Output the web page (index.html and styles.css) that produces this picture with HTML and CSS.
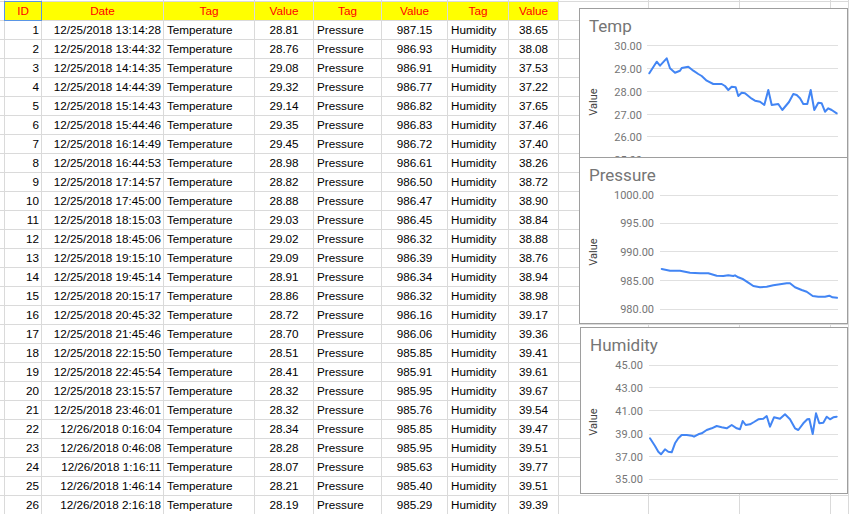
FILE: index.html
```html
<!DOCTYPE html>
<html>
<head>
<meta charset="utf-8">
<title>Sensor log</title>
<link rel="stylesheet" href="styles.css">
</head>
<body>
<table class="sheet">
<colgroup>
<col class="w-sliver"><col class="w-id"><col class="w-date"><col class="w-tag1"><col class="w-val1"><col class="w-tag2"><col class="w-val2"><col class="w-tag3"><col class="w-val3"><col class="w-e1"><col class="w-e"><col class="w-e"><col class="w-end">
</colgroup>
<tbody>
<tr class="sliver"><td></td><td></td><td></td><td></td><td></td><td></td><td></td><td></td><td></td><td></td><td></td><td></td><td></td></tr>
<tr class="hdr"><td class="blank"></td><td class="sel">ID</td><td>Date</td><td>Tag</td><td>Value</td><td>Tag</td><td>Value</td><td>Tag</td><td>Value</td><td class="blank"></td><td class="blank"></td><td class="blank"></td><td class="blank"></td></tr>
<tr><td></td><td class="r">1</td><td class="r">12/25/2018 13:14:28</td><td>Temperature</td><td class="c">28.81</td><td>Pressure</td><td class="c">987.15</td><td>Humidity</td><td class="c">38.65</td><td></td><td></td><td></td><td></td></tr>
<tr><td></td><td class="r">2</td><td class="r">12/25/2018 13:44:32</td><td>Temperature</td><td class="c">28.76</td><td>Pressure</td><td class="c">986.93</td><td>Humidity</td><td class="c">38.08</td><td></td><td></td><td></td><td></td></tr>
<tr><td></td><td class="r">3</td><td class="r">12/25/2018 14:14:35</td><td>Temperature</td><td class="c">29.08</td><td>Pressure</td><td class="c">986.91</td><td>Humidity</td><td class="c">37.53</td><td></td><td></td><td></td><td></td></tr>
<tr><td></td><td class="r">4</td><td class="r">12/25/2018 14:44:39</td><td>Temperature</td><td class="c">29.32</td><td>Pressure</td><td class="c">986.77</td><td>Humidity</td><td class="c">37.22</td><td></td><td></td><td></td><td></td></tr>
<tr><td></td><td class="r">5</td><td class="r">12/25/2018 15:14:43</td><td>Temperature</td><td class="c">29.14</td><td>Pressure</td><td class="c">986.82</td><td>Humidity</td><td class="c">37.65</td><td></td><td></td><td></td><td></td></tr>
<tr><td></td><td class="r">6</td><td class="r">12/25/2018 15:44:46</td><td>Temperature</td><td class="c">29.35</td><td>Pressure</td><td class="c">986.83</td><td>Humidity</td><td class="c">37.46</td><td></td><td></td><td></td><td></td></tr>
<tr><td></td><td class="r">7</td><td class="r">12/25/2018 16:14:49</td><td>Temperature</td><td class="c">29.45</td><td>Pressure</td><td class="c">986.72</td><td>Humidity</td><td class="c">37.40</td><td></td><td></td><td></td><td></td></tr>
<tr><td></td><td class="r">8</td><td class="r">12/25/2018 16:44:53</td><td>Temperature</td><td class="c">28.98</td><td>Pressure</td><td class="c">986.61</td><td>Humidity</td><td class="c">38.26</td><td></td><td></td><td></td><td></td></tr>
<tr><td></td><td class="r">9</td><td class="r">12/25/2018 17:14:57</td><td>Temperature</td><td class="c">28.82</td><td>Pressure</td><td class="c">986.50</td><td>Humidity</td><td class="c">38.72</td><td></td><td></td><td></td><td></td></tr>
<tr><td></td><td class="r">10</td><td class="r">12/25/2018 17:45:00</td><td>Temperature</td><td class="c">28.88</td><td>Pressure</td><td class="c">986.47</td><td>Humidity</td><td class="c">38.90</td><td></td><td></td><td></td><td></td></tr>
<tr><td></td><td class="r">11</td><td class="r">12/25/2018 18:15:03</td><td>Temperature</td><td class="c">29.03</td><td>Pressure</td><td class="c">986.45</td><td>Humidity</td><td class="c">38.84</td><td></td><td></td><td></td><td></td></tr>
<tr><td></td><td class="r">12</td><td class="r">12/25/2018 18:45:06</td><td>Temperature</td><td class="c">29.02</td><td>Pressure</td><td class="c">986.32</td><td>Humidity</td><td class="c">38.88</td><td></td><td></td><td></td><td></td></tr>
<tr><td></td><td class="r">13</td><td class="r">12/25/2018 19:15:10</td><td>Temperature</td><td class="c">29.09</td><td>Pressure</td><td class="c">986.39</td><td>Humidity</td><td class="c">38.76</td><td></td><td></td><td></td><td></td></tr>
<tr><td></td><td class="r">14</td><td class="r">12/25/2018 19:45:14</td><td>Temperature</td><td class="c">28.91</td><td>Pressure</td><td class="c">986.34</td><td>Humidity</td><td class="c">38.94</td><td></td><td></td><td></td><td></td></tr>
<tr><td></td><td class="r">15</td><td class="r">12/25/2018 20:15:17</td><td>Temperature</td><td class="c">28.86</td><td>Pressure</td><td class="c">986.32</td><td>Humidity</td><td class="c">38.98</td><td></td><td></td><td></td><td></td></tr>
<tr><td></td><td class="r">16</td><td class="r">12/25/2018 20:45:32</td><td>Temperature</td><td class="c">28.72</td><td>Pressure</td><td class="c">986.16</td><td>Humidity</td><td class="c">39.17</td><td></td><td></td><td></td><td></td></tr>
<tr><td></td><td class="r">17</td><td class="r">12/25/2018 21:45:46</td><td>Temperature</td><td class="c">28.70</td><td>Pressure</td><td class="c">986.06</td><td>Humidity</td><td class="c">39.36</td><td></td><td></td><td></td><td></td></tr>
<tr><td></td><td class="r">18</td><td class="r">12/25/2018 22:15:50</td><td>Temperature</td><td class="c">28.51</td><td>Pressure</td><td class="c">985.85</td><td>Humidity</td><td class="c">39.41</td><td></td><td></td><td></td><td></td></tr>
<tr><td></td><td class="r">19</td><td class="r">12/25/2018 22:45:54</td><td>Temperature</td><td class="c">28.41</td><td>Pressure</td><td class="c">985.91</td><td>Humidity</td><td class="c">39.61</td><td></td><td></td><td></td><td></td></tr>
<tr><td></td><td class="r">20</td><td class="r">12/25/2018 23:15:57</td><td>Temperature</td><td class="c">28.32</td><td>Pressure</td><td class="c">985.95</td><td>Humidity</td><td class="c">39.67</td><td></td><td></td><td></td><td></td></tr>
<tr><td></td><td class="r">21</td><td class="r">12/25/2018 23:46:01</td><td>Temperature</td><td class="c">28.32</td><td>Pressure</td><td class="c">985.76</td><td>Humidity</td><td class="c">39.54</td><td></td><td></td><td></td><td></td></tr>
<tr><td></td><td class="r">22</td><td class="r">12/26/2018 0:16:04</td><td>Temperature</td><td class="c">28.34</td><td>Pressure</td><td class="c">985.85</td><td>Humidity</td><td class="c">39.47</td><td></td><td></td><td></td><td></td></tr>
<tr><td></td><td class="r">23</td><td class="r">12/26/2018 0:46:08</td><td>Temperature</td><td class="c">28.28</td><td>Pressure</td><td class="c">985.95</td><td>Humidity</td><td class="c">39.51</td><td></td><td></td><td></td><td></td></tr>
<tr><td></td><td class="r">24</td><td class="r">12/26/2018 1:16:11</td><td>Temperature</td><td class="c">28.07</td><td>Pressure</td><td class="c">985.63</td><td>Humidity</td><td class="c">39.77</td><td></td><td></td><td></td><td></td></tr>
<tr><td></td><td class="r">25</td><td class="r">12/26/2018 1:46:14</td><td>Temperature</td><td class="c">28.21</td><td>Pressure</td><td class="c">985.40</td><td>Humidity</td><td class="c">39.51</td><td></td><td></td><td></td><td></td></tr>
<tr><td></td><td class="r">26</td><td class="r">12/26/2018 2:16:18</td><td>Temperature</td><td class="c">28.19</td><td>Pressure</td><td class="c">985.29</td><td>Humidity</td><td class="c">39.39</td><td></td><td></td><td></td><td></td></tr>
</tbody>
</table>

<div class="chart chart-temp">
<svg width="267" height="158" viewBox="0 0 267 158">
<g transform="translate(-580 -9)">
<text class="title" x="589" y="32">Temp</text>
<line class="grid" x1="647" x2="838" y1="45.5" y2="45.5"/>
<line class="grid" x1="647" x2="838" y1="68.5" y2="68.5"/>
<line class="grid" x1="647" x2="838" y1="91.5" y2="91.5"/>
<line class="grid" x1="647" x2="838" y1="114.5" y2="114.5"/>
<line class="grid" x1="647" x2="838" y1="136.5" y2="136.5"/>
<line class="grid" x1="647" x2="838" y1="159.5" y2="159.5"/>
<text class="tick" x="642" y="49.5">30.00</text>
<text class="tick" x="642" y="72.5">29.00</text>
<text class="tick" x="642" y="95.5">28.00</text>
<text class="tick" x="642" y="118.5">27.00</text>
<text class="tick" x="642" y="140.5">26.00</text>
<text class="tick" x="642" y="163.5">25.00</text>
<text class="axis" transform="translate(597 102) rotate(-90)">Value</text>
<polyline class="line" points="649.3,73.3 656.7,61.7 660,65.7 666.7,58.3 670,68.3 675,72.7 680,70.7 681.7,68 688.3,66.7 693.3,70.7 698.3,74 701.7,76 706.7,80.7 713.3,84 721.7,84 725,86 728.3,90 731.7,86.7 735.7,87.3 738.3,96 741.7,92.7 745,93.3 751.7,98.7 755,100.7 760,101.7 764.3,105 768.3,90 771.7,105 778.3,104 782.3,110 789,102 793.3,94 796.7,95 800,98.3 803.3,104 807.3,104 810.7,90 814.3,110 818.3,102.7 821.7,103.3 825,111.7 828.3,108.3 831.7,110 836.7,113.3"/>
</g>
</svg>
</div>

<div class="chart chart-pressure">
<svg width="267" height="165" viewBox="0 0 267 165">
<g transform="translate(-580 -158)">
<text class="title" x="589" y="181">Pressure</text>
<line class="grid" x1="660" x2="838" y1="195.5" y2="195.5"/>
<line class="grid" x1="660" x2="838" y1="223.5" y2="223.5"/>
<line class="grid" x1="660" x2="838" y1="251.5" y2="251.5"/>
<line class="grid" x1="660" x2="838" y1="280.5" y2="280.5"/>
<line class="grid" x1="660" x2="838" y1="309.5" y2="309.5"/>
<text class="tick" x="654" y="199">1000.00</text>
<text class="tick" x="654" y="227">995.00</text>
<text class="tick" x="654" y="255.5">990.00</text>
<text class="tick" x="654" y="284.5">985.00</text>
<text class="tick" x="654" y="313">980.00</text>
<text class="axis" transform="translate(597 252) rotate(-90)">Value</text>
<polyline class="line" points="661.7,269 670,270.7 680,270.7 690,272.7 700,273.3 708.3,273.3 716.7,275.7 723.3,276 728.3,275.3 733.3,276 735,275.3 738.3,277.3 743.3,279.3 748.3,282.7 753.3,286 760,287.3 766.7,286.7 773.3,285.3 780,284.3 786.7,283.3 790,283.3 795,287.3 801.7,290 806.7,291.7 812.7,296 818.3,296.7 825,296.7 829.3,295.7 832.5,297.3 837,297.8"/>
</g>
</svg>
</div>

<div class="chart chart-humidity">
<svg width="266" height="165" viewBox="0 0 266 165">
<g transform="translate(-581 -328)">
<text class="title" x="590" y="351">Humidity</text>
<line class="grid" x1="649" x2="838" y1="365.5" y2="365.5"/>
<line class="grid" x1="649" x2="838" y1="387.5" y2="387.5"/>
<line class="grid" x1="649" x2="838" y1="410.5" y2="410.5"/>
<line class="grid" x1="649" x2="838" y1="434.5" y2="434.5"/>
<line class="grid" x1="649" x2="838" y1="456.5" y2="456.5"/>
<line class="grid" x1="649" x2="838" y1="479.5" y2="479.5"/>
<text class="tick" x="643" y="369">45.00</text>
<text class="tick" x="643" y="391.5">43.00</text>
<text class="tick" x="643" y="414.5">41.00</text>
<text class="tick" x="643" y="438">39.00</text>
<text class="tick" x="643" y="460.5">37.00</text>
<text class="tick" x="643" y="483">35.00</text>
<text class="axis" transform="translate(597 422) rotate(-90)">Value</text>
<polyline class="line" points="650,438.3 655,446 658.3,451.7 661,454.3 665,449.3 668.3,451.7 671.7,452.3 675,443.3 678.3,438.3 681.7,435 686.7,435 691.7,435.7 694,436.7 698.3,434.3 701.7,433.3 706.7,430 711.7,428.3 716.7,426 721.7,427.3 726.7,428.3 731.7,425 736.7,428.3 740,429.3 742.7,421 745.7,425 750,424.3 754,422 758.3,419.3 763.3,418.7 766.7,416 770,426.7 774,417.3 780,418.7 785,414.3 790,419.3 795,428.3 798.3,430 803.3,423.3 807.3,419.3 809.3,419 812.7,434 816,413.3 819.3,423.3 823.3,422.7 826.7,416.7 830,419.3 833.3,417.3 836.7,416.7"/>
</g>
</svg>
</div>
</body>
</html>
```

FILE: styles.css
```css
html, body {
  margin: 0;
  padding: 0;
}

body {
  position: relative;
  width: 849px;
  height: 514px;
  overflow: hidden;
  background: #ffffff;
  font-family: "Liberation Sans", Arial, sans-serif;
  font-size: 11.7px;
  color: #000000;
}

.sheet {
  border-collapse: separate;
  border-spacing: 1px;
  background: #dadada;
  table-layout: fixed;
  width: 850px;
  margin: -1px 0 0 -1px;
}

.w-sliver { width: 4px; }
.w-id { width: 36px; }
.w-date { width: 121px; }
.w-tag1 { width: 90px; }
.w-val1 { width: 58px; }
.w-tag2 { width: 67px; }
.w-val2 { width: 65px; }
.w-tag3 { width: 60px; }
.w-val3 { width: 49px; }
.w-e1 { width: 89px; }
.w-e { width: 90px; }
.w-end { width: 17px; }

.sheet td {
  background: #ffffff;
  height: 18px;
  line-height: 18px;
  padding: 0 3px;
  white-space: nowrap;
  overflow: hidden;
  text-align: left;
}

.sheet .sliver td {
  height: 1px;
  line-height: 1px;
  font-size: 0;
  padding: 0;
}

.sheet td.r {
  text-align: right;
  padding-right: 2px;
}

.sheet td.c {
  text-align: center;
}

.sheet .hdr td {
  background: #ffff00;
  color: #ff0000;
  text-align: center;
}

.sheet .hdr td.blank {
  background: #ffffff;
}

.sheet .hdr td.sel {
  outline: 1px solid #5a95e4;
}

.chart {
  position: absolute;
  box-sizing: border-box;
  border: 1px solid #9e9e9e;
  background: #ffffff;
  overflow: hidden;
}

.chart svg {
  display: block;
}

.chart-temp {
  left: 579px;
  top: 8px;
  width: 269px;
  height: 160px;
}

.chart-pressure {
  left: 579px;
  top: 157px;
  width: 269px;
  height: 167px;
}

.chart-humidity {
  left: 580px;
  top: 327px;
  width: 268px;
  height: 167px;
}

.chart text {
  font-family: Roboto, "Liberation Sans", sans-serif;
}

.chart .title {
  font-size: 17px;
  fill: #757575;
}

.chart .tick {
  font-size: 11px;
  fill: #757575;
  text-anchor: end;
}

.chart .axis {
  font-size: 11px;
  fill: #444444;
  text-anchor: middle;
}

.chart .grid {
  stroke: #e0e0e0;
  stroke-width: 1;
}

.chart .line {
  fill: none;
  stroke: #4285f4;
  stroke-width: 2;
  stroke-linejoin: round;
  stroke-linecap: round;
}
```
